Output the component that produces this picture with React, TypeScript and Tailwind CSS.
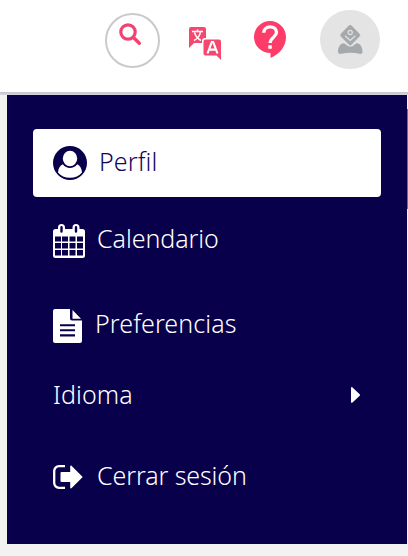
import React from "react";
import { clsx } from "clsx";

function SearchIcon() {
  return (
    <svg viewBox="0 0 23 23" className="size-[23px]" fill="none" stroke="#f14370">
      <circle cx="9" cy="9" r="7.200" strokeWidth="3.200" />
      <path d="m14.500 14.500 5.800 5.800" strokeWidth="3.400" strokeLinecap="round" />
    </svg>
  );
}

function TranslateIcon() {
  return (
    <svg viewBox="0 0 32 33" className="h-[33px] w-8" fill="none">
      <path d="M2 0h13a2 2 0 0 1 2 2v9h-1a3 3 0 0 0-3 3v2H5l-5 5V2a2 2 0 0 1 2-2Z" fill="#f5486f" />
      <path d="M16.500 12.500h13.500a2 2 0 0 1 2 2V33l-4.500-4.500h-11a2 2 0 0 1-2-2v-12a2 2 0 0 1 2-2Z" fill="#f5486f" />
      <path d="M3 4.500h11M8.500 2.500v2M5 13.500c3-1.500 6-5 6.500-9M5.500 5.500c.8 3 3 6 6.500 8" stroke="#fff" strokeWidth="1.500" />
      <path d="m18.500 26.500 4.300-11.500h1.400l4.300 11.500M20 22.600h7" stroke="#fff" strokeWidth="2.100" />
    </svg>
  );
}

function HelpIcon() {
  return (
    <svg viewBox="0 0 32 37" className="h-[37px] w-8" fill="none">
      <path d="M16 0C7.200 0 0 7.200 0 16s7.200 16 16.500 16v5C26 33 32 25 32 16S24.800 0 16 0Z" fill="#fd3c69" />
      <path d="M9.800 11.800c0-3.800 2.800-6 6.400-6 3.500 0 6.300 2.300 6.300 5.500 0 4.700-6.400 5.500-6.400 10.700" stroke="#fff" strokeWidth="3.300" />
      <path d="M14.300 24.200h3.500v3.500h-3.500z" fill="#fff" />
    </svg>
  );
}

function AvatarIcon() {
  return (
    <svg viewBox="0 0 25 30" className="h-[30px] w-[25px]" fill="none">
      <path d="M5.500 18.300c1.500 0 4.200 3.500 6.800 3.500s5.200-3.500 6.800-3.500c3.200 0 5.400 4.300 5.400 8.300 0 1.900-1.200 2.700-3.100 2.200-6-1.500-12.200-1.500-18.200 0-1.900.5-3.200-.3-3.200-2.200 0-4 2.200-8.300 5.500-8.300Z" fill="#a5a9ac" />
      <path d="M10.700.500 2.700 8.800a2 2 0 0 0 0 2.700l8 8.300a2 2 0 0 0 3 0l8-8.300a2 2 0 0 0 0-2.700L13.700.500a2 2 0 0 0-3 0Z" fill="#a5a9ac" stroke="#e4e4e4" strokeWidth=".4" />
      <circle cx="12.200" cy="7.500" r="2.100" stroke="#e2e2e2" strokeWidth="1.200" />
      <path d="m7 10.800 5.200 4.700 5.200-4.700" stroke="#e2e2e2" strokeWidth="1.200" />
    </svg>
  );
}

function ProfileIcon() {
  return (
    <svg viewBox="0 0 34 34" className="size-[34px]">
      <circle cx="17" cy="17" r="17" fill="#09004c" />
      <path d="M9.800 18.300C7 19.400 5.300 22.500 5 26.400c2.600 3.500 7 5.300 12 5.300s9.400-1.800 12-5.300c-.3-3.900-2-7-4.800-8.100-3.700 5-10.700 5-14.400 0Z" fill="#fff" />
      <ellipse cx="17" cy="12.500" rx="7.200" ry="7.700" fill="#fff" />
    </svg>
  );
}

function CalendarIcon() {
  return (
    <svg viewBox="0 0 32 34" className="h-[34px] w-8" fill="none">
      <path d="M2.500 5h27A2.500 2.500 0 0 1 32 7.500v24a2.500 2.500 0 0 1-2.500 2.500h-27A2.500 2.500 0 0 1 0 31.500v-24A2.500 2.500 0 0 1 2.500 5Z" fill="#fff" />
      <path d="M2 12.500h6v5H2zm7 0h6v5H9zm7.500 0h6v5h-6zm7.500 0h6v5h-6zM2 19h6v5.500H2zm7 0h6v5.500H9zm7.500 0h6v5.500h-6zm7.500 0h6v5.500h-6zM2 26h6v5.500H2zm7 0h6v5.500H9zm7.500 0h6v5.500h-6zm7.500 0h6v5.500h-6z" fill="#09004c" />
      <path d="M8.500 3.500v4M23 3.500v4" stroke="#fff" strokeWidth="7" strokeLinecap="round" />
      <path d="M8.500 3.300v4.200M23 3.300v4.200" stroke="#09004c" strokeWidth="2.400" strokeLinecap="round" />
    </svg>
  );
}

function DocumentIcon() {
  return (
    <svg viewBox="0 0 29 34" className="h-[34px] w-[29px]" fill="none">
      <path d="M2 0h15v9.500a2 2 0 0 0 2 2h10V32a2 2 0 0 1-2 2H2a2 2 0 0 1-2-2V2a2 2 0 0 1 2-2Z" fill="#fff" />
      <path d="M19.500 1 28 9.700h-8.500z" fill="#fff" />
      <path d="M7 16.200h15M7 21.300h15M7 26.400h15" stroke="#09004c" strokeWidth="2.100" />
    </svg>
  );
}

function LogoutIcon() {
  return (
    <svg viewBox="0 0 30 24" className="h-6 w-[30px]" fill="none">
      <path d="M12 1.200H6A4.800 4.800 0 0 0 1.200 6v12A4.800 4.800 0 0 0 6 22.800h6" stroke="#fff" strokeWidth="2.300" />
      <path d="M8.500 7h8.700V1.500c0-1 .8-1.300 1.500-.6L29 11.200a1 1 0 0 1 0 1.600L18.700 23.100c-.7.700-1.500.4-1.500-.6V17H8.500a1 1 0 0 1-1-1V8a1 1 0 0 1 1-1Z" fill="#fff" />
    </svg>
  );
}

const items = [
  { label: "Perfil", icon: <ProfileIcon />, row: "h-[68px] gap-3 rounded-[4px] bg-white text-[#160858]", text: "pb-[3px] tracking-[0.1px]" },
  { label: "Calendario", icon: <CalendarIcon />, row: "h-[88px] gap-3", text: "pb-[6px] tracking-[-0.05px]" },
  { label: "Preferencias", icon: <DocumentIcon />, row: "h-[82px] gap-[13px]", text: "pb-[5px] tracking-[0.1px]" },
  { label: "Idioma", icon: null, row: "h-[58px] justify-between", text: "pb-[3px] tracking-[0.1px]" },
  { label: "Cerrar sesión", icon: <LogoutIcon />, row: "h-[103px] gap-[14px]", text: "pb-[2px] tracking-[-0.1px]" },
];

export default function App() {
  return (
    <div className="flex h-[556px] w-[408px] flex-col overflow-hidden bg-[#f2f2f2] font-['Noto_Sans',sans-serif]">
      {/* Top toolbar */}
      <header className="flex h-[92px] shrink-0 items-start bg-white pl-[105px]">
        <button className="mt-[13px] flex size-[55px] items-start rounded-full border-2 border-[#cacaca] pt-2 pl-3">
          <SearchIcon />
        </button>
        <div className="mt-[27px] ml-[29px]">
          <TranslateIcon />
        </div>
        <div className="mt-[21px] ml-[33px]">
          <HelpIcon />
        </div>
        <div className="mt-[10px] ml-[34px] flex h-[59px] w-[60px] items-center justify-center rounded-full bg-[#e4e4e4]">
          <AvatarIcon />
        </div>
      </header>
      <div className="h-[3px] shrink-0 bg-linear-to-b from-[#c4c4c7] to-[#d5d5e3]" />

      <div className="flex">
        <nav className="ml-[7px] h-[449px] w-[400px] shrink-0 bg-[#09004c] px-[26px] pt-[34px] text-white">
          {items.map((item) => (
            <div key={item.label} className={clsx("flex items-center px-5 text-[25px] leading-none font-[350]", item.row)}>
              {item.icon}
              <span className={clsx("whitespace-nowrap", item.text)}>{item.label}</span>
              {!item.icon && (
                <svg viewBox="0 0 9 16" className="mr-px mb-[2px] h-4 w-[9px]" fill="currentColor">
                  <path d="M0 1.200C0 0 .8-.2 1.500.5l7.200 6.800a1 1 0 0 1 0 1.400l-7.200 6.800c-.7.700-1.500.5-1.500-.7Z" />
                </svg>
              )}
            </div>
          ))}
        </nav>
        <div className="mt-[14px] h-[100px] w-px shrink-0 bg-[#bd4673]" />
      </div>
    </div>
  );
}
